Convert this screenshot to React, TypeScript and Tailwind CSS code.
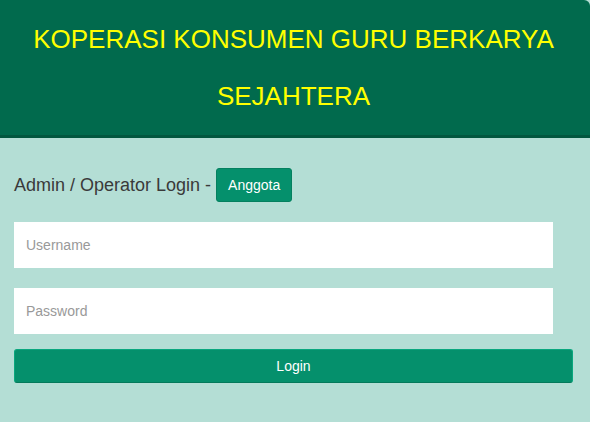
import * as React from "react";

export default function App() {
  return (
    <div className="min-h-[422px] w-full bg-[#b4ded5] font-['Liberation_Sans',Arial,sans-serif]">
      <div className="h-[138px] bg-[#016a4d] border-b-[3px] border-[#02573f] rounded-tr-[6px] flex flex-col items-center pt-[11px] pr-[3px]">
        <h1 className="text-[26px] leading-[57px] text-[#ffff00] text-center">KOPERASI KONSUMEN GURU BERKARYA</h1>
        <h1 className="text-[26px] leading-[57px] text-[#ffff00] text-center">SEJAHTERA</h1>
      </div>
      <div className="pl-[14px] pr-[17px] pt-[30px]">
        <div className="flex items-center gap-[5px] h-[34px]">
          <span className="text-[18px] text-[#3a3a3a]">Admin / Operator Login -</span>
          <button className="h-[34px] px-[11px] rounded-[3px] bg-[#05906c] border border-[#04805f] text-white text-[14px]">
            Anggota
          </button>
        </div>
        <div className="flex flex-col mt-[20px] w-[539px]">
          <input
            className="h-[46px] bg-white px-[12px] text-[14px] text-[#555] placeholder:text-[#999] outline-none"
            placeholder="Username"
          />
          <input
            type="password"
            className="h-[46px] mt-[20px] bg-white px-[12px] text-[14px] text-[#555] placeholder:text-[#999] outline-none"
            placeholder="Password"
          />
        </div>
        <button className="mt-[15px] w-full h-[34px] rounded-[3px] bg-[#05906c] border border-[#0aa77e] border-b-[#047a5b] text-white text-[14px]">
          Login
        </button>
      </div>
    </div>
  );
}
